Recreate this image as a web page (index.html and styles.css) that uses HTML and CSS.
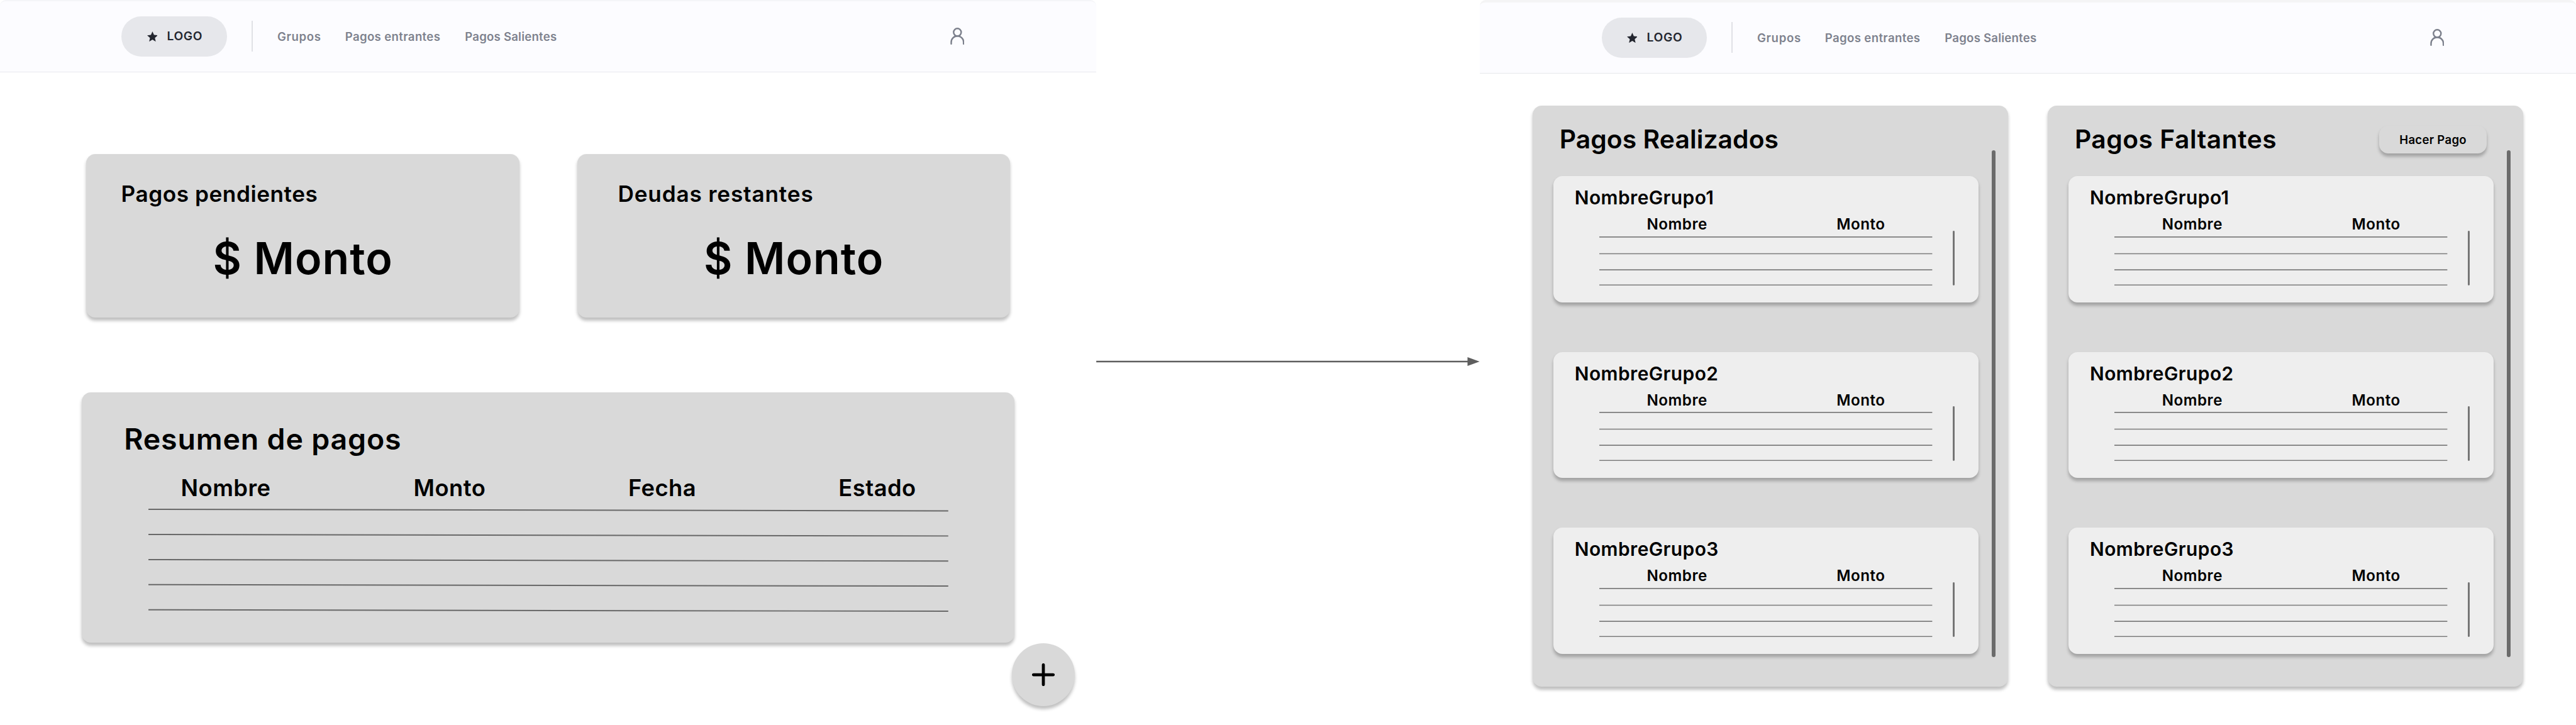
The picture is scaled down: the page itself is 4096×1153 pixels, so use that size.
FILE: index.html
```html
<!DOCTYPE html>
<html lang="es">
<head>
<meta charset="utf-8">
<title>Pagos</title>
<link rel="stylesheet" href="styles.css">
</head>
<body>
<svg class="defs" aria-hidden="true">
  <symbol id="star" viewBox="0 0 29 28"><path d="M14.5 0l4.2 9.6 10.3 1-7.8 6.9 2.3 10.3-9-5.4-9 5.4 2.3-10.3L0 10.6l10.3-1z"/></symbol>
  <symbol id="user" viewBox="0 0 39 47"><g fill="none" stroke="currentColor" stroke-width="4.2" stroke-linecap="round"><circle cx="19.5" cy="12.6" r="10.4"/><path d="M2.6 44.4v-4.6a16.9 16.9 0 0 1 33.8 0v4.6"/></g></symbol>
  <symbol id="rows" viewBox="0 0 912 150" preserveAspectRatio="none"><g stroke="#7c7c7c" stroke-width="2.8"><path d="M0 13.5h912M0 59.4h912M0 103.4h912M0 145.1h912"/></g></symbol>
</svg>

<section class="frame">
  <header class="topbar">
    <div class="logo"><svg class="star"><use href="#star"/></svg><span>LOGO</span></div>
    <div class="divider"></div>
    <nav class="nav"><a class="nav-groups">Grupos</a><a class="nav-in">Pagos entrantes</a><a class="nav-out">Pagos Salientes</a></nav>
    <svg class="user"><use href="#user"/></svg>
  </header>
  <main class="dashboard">
    <div class="cards">
      <article class="card"><h2 class="card-title">Pagos pendientes</h2><p class="amount">$ Monto</p></article>
      <article class="card card-debts"><h2 class="card-title">Deudas restantes</h2><p class="amount">$ Monto</p></article>
    </div>
    <article class="summary">
      <h1 class="summary-title">Resumen de pagos</h1>
      <div class="summary-table">
        <div class="summary-head"><span>Nombre</span><span>Monto</span><span>Fecha</span><span>Estado</span></div>
        <svg class="summary-lines" viewBox="0 0 2189 320" preserveAspectRatio="none"><path d="M0 27.5L2189 31.9M0 96.4L2189 100.5M0 165.2L2189 169.2M0 233.6L2189 237.7M0 302.4L2189 306.5" stroke="#686868" stroke-width="3.4"/></svg>
      </div>
    </article>
  </main>
  <button class="add" aria-label="Agregar"><svg class="plus" viewBox="0 0 62 62"><path d="M31 4v54M4 31h54" stroke="#000" stroke-width="8.2" stroke-linecap="round"/></svg></button>
</section>

<div class="link">
  <svg class="arrow" viewBox="0 0 1050 24"><path d="M0 12h1018" stroke="#5e5e5e" stroke-width="4.2"/><path d="M1016.5 0l33 12-33 12z" fill="#5e5e5e"/></svg>
</div>

<section class="frame frame-detail">
  <header class="topbar">
    <div class="logo"><svg class="star"><use href="#star"/></svg><span>LOGO</span></div>
    <div class="divider"></div>
    <nav class="nav"><a class="nav-groups">Grupos</a><a class="nav-in">Pagos entrantes</a><a class="nav-out">Pagos Salientes</a></nav>
    <svg class="user"><use href="#user"/></svg>
  </header>
  <main class="panels">
    <section class="panel">
      <div class="panel-body">
        <div class="panel-head"><h1 class="panel-title">Pagos Realizados</h1></div>
        <div class="groups">
          <article class="group"><h2 class="group-name">NombreGrupo1</h2><div class="group-body"><div class="group-table"><div class="group-head"><span>Nombre</span><span>Monto</span></div><svg class="group-lines"><use href="#rows"/></svg></div><div class="group-scroll"></div></div></article>
          <article class="group"><h2 class="group-name">NombreGrupo2</h2><div class="group-body"><div class="group-table"><div class="group-head"><span>Nombre</span><span>Monto</span></div><svg class="group-lines"><use href="#rows"/></svg></div><div class="group-scroll"></div></div></article>
          <article class="group"><h2 class="group-name">NombreGrupo3</h2><div class="group-body"><div class="group-table"><div class="group-head"><span>Nombre</span><span>Monto</span></div><svg class="group-lines"><use href="#rows"/></svg></div><div class="group-scroll"></div></div></article>
        </div>
      </div>
      <div class="panel-scroll"></div>
    </section>
    <section class="panel">
      <div class="panel-body">
        <div class="panel-head"><h1 class="panel-title panel-title-due">Pagos Faltantes</h1><button class="pay">Hacer Pago</button></div>
        <div class="groups">
          <article class="group"><h2 class="group-name">NombreGrupo1</h2><div class="group-body"><div class="group-table"><div class="group-head"><span>Nombre</span><span>Monto</span></div><svg class="group-lines"><use href="#rows"/></svg></div><div class="group-scroll"></div></div></article>
          <article class="group"><h2 class="group-name">NombreGrupo2</h2><div class="group-body"><div class="group-table"><div class="group-head"><span>Nombre</span><span>Monto</span></div><svg class="group-lines"><use href="#rows"/></svg></div><div class="group-scroll"></div></div></article>
          <article class="group"><h2 class="group-name">NombreGrupo3</h2><div class="group-body"><div class="group-table"><div class="group-head"><span>Nombre</span><span>Monto</span></div><svg class="group-lines"><use href="#rows"/></svg></div><div class="group-scroll"></div></div></article>
        </div>
      </div>
      <div class="panel-scroll"></div>
    </section>
  </main>
</section>
</body>
</html>
```
FILE: styles.css
```css
* { box-sizing: border-box; margin: 0; padding: 0; }

:root {
  font-size: 5.81px;
  --surface: #d9d9d9;
  --shadow: 0 .83rem .83rem rgba(0, 0, 0, .25);
}

body {
  display: flex;
  height: 1153px;
  overflow: hidden;
  background: #fff;
  color: #000;
  font-family: Inter, "Liberation Sans", sans-serif;
  font-weight: 600;
  line-height: 1;
}

h1, h2 { font-weight: 600; }
svg { display: block; flex: none; }
button { border: 0; font: inherit; color: inherit; background: var(--surface); box-shadow: var(--shadow); }
.defs { position: absolute; width: 0; height: 0; }

.frame { position: relative; flex: none; width: 300rem; height: 100%; }

/* Top bar */
.topbar {
  display: flex;
  align-items: center;
  height: 19.75rem;
  padding: 0 36.1rem 0 33.3rem;
  border-top: .35rem solid #f4f5f8;
  border-bottom: .3rem solid #e8e9ed;
  border-radius: 1.6rem 1.6rem 0 0;
  background: #fcfcff;
}
.frame-detail .topbar { height: 20.1rem; border-top: .7rem solid #f4f4f5; border-bottom-color: #e6e7eb; }
.logo {
  display: flex;
  align-items: center;
  width: 28.8rem;
  height: 10.9rem;
  padding-left: 6.9rem;
  gap: 2.6rem;
  border-radius: 5.45rem;
  background: #e6e7eb;
  color: #23262f;
}
.logo span { font-size: 3.3rem; letter-spacing: .035em; }
.star { width: 2.9rem; height: 2.8rem; fill: #23262f; }
.divider { width: .35rem; height: 8.4rem; margin-left: 6.7rem; background: #e0e1e6; }
.nav {
  display: grid;
  grid-template-columns: 18.55rem 32.8rem auto;
  margin-left: 6.75rem;
  color: #7e828e;
  font-size: 3.2rem;
}
.nav-groups { letter-spacing: .036em; }
.nav-in { letter-spacing: .02em; }
.nav-out { letter-spacing: .012em; }
.user { width: 3.9rem; height: 4.7rem; margin-left: auto; color: #7c808c; }

/* Dashboard */
.dashboard { padding: 22.35rem 0 0 22.4rem; }
.cards { display: flex; gap: 15.85rem; padding-left: 1.25rem; }
.card {
  width: 118.5rem;
  height: 44.8rem;
  padding-top: 7.95rem;
  border-radius: 2.5rem;
  background: var(--surface);
  box-shadow: var(--shadow);
}
.card-title { padding-left: 9.5rem; font-size: 6.05rem; letter-spacing: .016em; }
.card-debts .card-title { padding-left: 11.1rem; letter-spacing: .024em; }
.amount { margin-top: 8.56rem; text-align: center; font-size: 12.03rem; letter-spacing: .0146em; }

.summary {
  width: 255.3rem;
  height: 68.5rem;
  margin-top: 20.43rem;
  padding-top: 8.89rem;
  border-radius: 2.5rem;
  background: var(--surface);
  box-shadow: var(--shadow);
}
.summary-title { padding-left: 11.55rem; font-size: 8rem; letter-spacing: .018em; }
.summary-table { width: 218.9rem; margin: 6.21rem 0 0 18.2rem; }
.summary-head {
  display: grid;
  grid-template-columns: 63.68rem 58.75rem 57.57rem auto;
  padding-left: 8.9rem;
}
.summary-head span { font-size: 6.25rem; letter-spacing: .013em; }
.summary-lines { width: 218.9rem; height: 32rem; }

.add {
  position: absolute;
  right: 5.8rem;
  bottom: 5.2rem;
  display: grid;
  place-items: center;
  width: 17.2rem;
  height: 17.2rem;
  border-radius: 50%;
}
.plus { width: 6.2rem; height: 6.2rem; }

/* Connector between the two frames */
.link { flex: none; width: 105rem; padding-top: 97.8rem; }
.arrow { width: 105rem; height: 2.4rem; }

/* Payment panels */
.panels { display: flex; gap: 10.9rem; padding: 8.77rem 0 0 14.5rem; }
.panel {
  display: flex;
  width: 130.1rem;
  height: 159rem;
  border-radius: 2.5rem;
  background: var(--surface);
  box-shadow: var(--shadow);
}
.panel-body { width: 121.9rem; }
.panel-head {
  display: flex;
  justify-content: space-between;
  align-items: flex-start;
  height: 19.33rem;
  padding: 5.53rem 1.9rem 0 7.3rem;
}
.panel-title { margin-top: .24rem; font-size: 7.02rem; letter-spacing: .0024em; }
.panel-title-due { letter-spacing: .0125em; }
.pay {
  width: 29.3rem;
  height: 7.56rem;
  border-radius: 2.5rem;
  font-size: 3.2rem;
  letter-spacing: .015em;
}
.panel-scroll {
  width: 1.07rem;
  height: 138.75rem;
  margin: 12.33rem 0 0 3.64rem;
  border-radius: .54rem;
  background: #6b6b6b;
}

.groups { display: flex; flex-direction: column; gap: 13.55rem; padding-left: 5.66rem; }
.group {
  width: 116.25rem;
  height: 34.57rem;
  padding-top: 3.48rem;
  border-radius: 2.5rem;
  background: #eee;
  box-shadow: var(--shadow);
}
.group-name { padding-left: 5.8rem; font-size: 5.15rem; letter-spacing: .014em; }
.group-body { display: flex; margin-top: 2.6rem; padding-left: 12.54rem; }
.group-table { width: 91.16rem; }
.group-head { display: grid; grid-template-columns: 51.94rem auto; margin-bottom: -.15rem; padding-left: 13rem; }
.group-head span { font-size: 4.15rem; letter-spacing: .022em; }
.group-lines { width: 91.16rem; height: 15rem; }
.group-scroll {
  width: .5rem;
  height: 15rem;
  margin: 3.67rem 0 0 5.6rem;
  border-radius: .25rem;
  background: #757575;
}
```
